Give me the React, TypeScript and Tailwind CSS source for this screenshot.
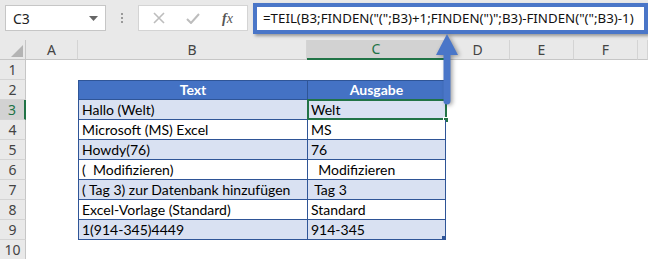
import React from 'react';

const rows = [
  { text: 'Hallo (Welt)', out: 'Welt' },
  { text: 'Microsoft (MS) Excel', out: 'MS' },
  { text: 'Howdy(76)', out: '76' },
  { text: '(  Modifizieren)', out: '  Modifizieren' },
  { text: '( Tag 3) zur Datenbank hinzufügen', out: ' Tag 3' },
  { text: 'Excel-Vorlage (Standard)', out: 'Standard' },
  { text: '1(914-345)4449', out: '914-345' },
];

const cols = 'grid grid-cols-[26px_52px_229px_139px_64px_64px_64px_1fr] h-5 leading-none';
const cellFont = { fontFamily: 'Lato, "Liberation Sans", sans-serif' };

const RowHead = ({ n, active }: { n: number; active?: boolean }) => (
  <div
    className={`h-5 flex items-center justify-center text-[14px] border-b border-[#d4d4d4] ${
      active ? 'bg-[#d2d2d2] text-[#217346] border-r-2 border-r-[#217346]' : 'bg-[#e9e9e9] text-[#444] border-r border-r-[#c6c6c6]'
    }`}
  >
    {n}
  </div>
);

const App = () => {
  const formula = '=TEIL(B3;FINDEN("(";B3)+1;FINDEN(")";B3)-FINDEN("(";B3)-1)';

  return (
    <div className="w-[648px] h-[259px] overflow-hidden bg-white relative" style={{ fontFamily: '"Noto Sans", "Liberation Sans", sans-serif' }}>
      {/* Formula bar */}
      <div className="h-10 bg-[#e9e9e9] flex items-start pt-[4px] pl-[5px]">
        <div className="mt-[1px] w-[101px] h-[26px] bg-white border border-[#c6c6c6] flex items-center justify-between px-[7px]">
          <span className="text-[14px] text-[#222]">C3</span>
          <svg width="9" height="5" viewBox="0 0 9 5"><path d="M0 0h9L4.5 5z" fill="#666" /></svg>
        </div>
        <div className="w-[32px] h-[26px] flex flex-col items-center justify-center gap-[2px] mt-[1px]">
          <span className="w-[2px] h-[2px] bg-[#9a9a9a]" />
          <span className="w-[2px] h-[2px] bg-[#9a9a9a]" />
          <span className="w-[2px] h-[2px] bg-[#9a9a9a]" />
        </div>
        <div className="mt-[1px] w-[110px] h-[26px] bg-white border border-[#d4d4d4] flex items-center">
          <svg className="ml-[14px]" width="12" height="12" viewBox="0 0 12 12"><path d="M1 1l10 10M11 1L1 11" stroke="#bdbdbd" strokeWidth="1.6" /></svg>
          <svg className="ml-[21px]" width="14" height="11" viewBox="0 0 14 11"><path d="M1 6l4 4 8-9" stroke="#bdbdbd" strokeWidth="2" fill="none" /></svg>
          <span className="ml-[22px] text-[14px] italic text-[#555]" style={{ fontFamily: '"Liberation Serif", serif' }}>
            <b>f</b>x
          </span>
        </div>
        <div className="ml-[5px] -mt-[1px] w-[395px] h-[31px] border-4 border-[#4a76c8] bg-white shadow-[2px_2px_3px_rgba(0,0,0,0.35)] flex items-center pl-[6px]">
          <span className="text-[13.3px] text-[#111] whitespace-nowrap">{formula}</span>
        </div>
      </div>

      {/* Column headers */}
      <div className={`${cols} text-[14px] text-[#444] bg-[#e9e9e9]`}>
        <div className="border-r border-b border-[#c6c6c6] flex items-end justify-end p-[2px]">
          <svg width="12" height="12" viewBox="0 0 12 12"><path d="M12 0v12H0z" fill="#b4b4b4" /></svg>
        </div>
        {['A', 'B', 'C', 'D', 'E', 'F', 'G'].map((c) => (
          <div
            key={c}
            className={`flex items-center justify-center border-r border-[#d4d4d4] ${
              c === 'C' ? 'bg-[#d2d2d2] text-[#217346] border-b-2 border-b-[#217346]' : 'border-b border-b-[#c6c6c6]'
            }`}
          >
            {c === 'G' ? '' : c}
          </div>
        ))}
      </div>

      {/* Row 1 */}
      <div className={cols}>
        <RowHead n={1} />
      </div>

      {/* Row 2: table header */}
      <div className={cols}>
        <RowHead n={2} />
        <div />
        <div className="bg-[#4472c4] border border-[#2f5597] border-r-0 text-white font-bold text-[14px] flex items-center justify-center" style={cellFont}>
          Text
        </div>
        <div className="bg-[#4472c4] border border-[#2f5597] text-white font-bold text-[14px] flex items-center justify-center" style={cellFont}>
          Ausgabe
        </div>
      </div>

      {rows.map((r, i) => {
        const shaded = i % 2 === 0;
        const bg = shaded ? 'bg-[#d9e1f2]' : 'bg-white';
        return (
          <div key={i} className={cols}>
            <RowHead n={i + 3} active={i === 0} />
            <div />
            <div className={`${bg} border-l border-b border-[#2f5597] flex items-center pl-[3px] text-[14px] text-black whitespace-pre`} style={cellFont}>
              {r.text}
            </div>
            <div
              className={`${bg} border-l border-r border-b border-[#2f5597] flex items-center pl-[3px] text-[14px] text-black whitespace-pre relative`}
              style={cellFont}
            >
              {i === 0 && <div className="absolute -left-[1px] -top-[1px] w-[140px] h-[21px] border-2 border-[#217346]" />}
              {i === 0 && <div className="absolute -right-[4px] -bottom-[4px] w-[6px] h-[6px] bg-[#217346] border border-white" />}
              {i === 6 && <div className="absolute right-0 bottom-0 w-[3px] h-[3px] bg-[#2f5597]" />}
              {r.out}
            </div>
          </div>
        );
      })}

      <div className={cols}>
        <RowHead n={10} />
      </div>

      {/* Arrow annotation */}
      <svg className="absolute left-[433px] top-[32px] drop-shadow-[2px_1px_2px_rgba(0,0,0,0.35)]" width="28" height="74" viewBox="0 0 28 74">
        <path d="M14 2L25 23H17.5V69a3.5 3.5 0 0 1-7 0V23H3z" fill="#4a76c8" />
      </svg>
    </div>
  );
};

export default App;
